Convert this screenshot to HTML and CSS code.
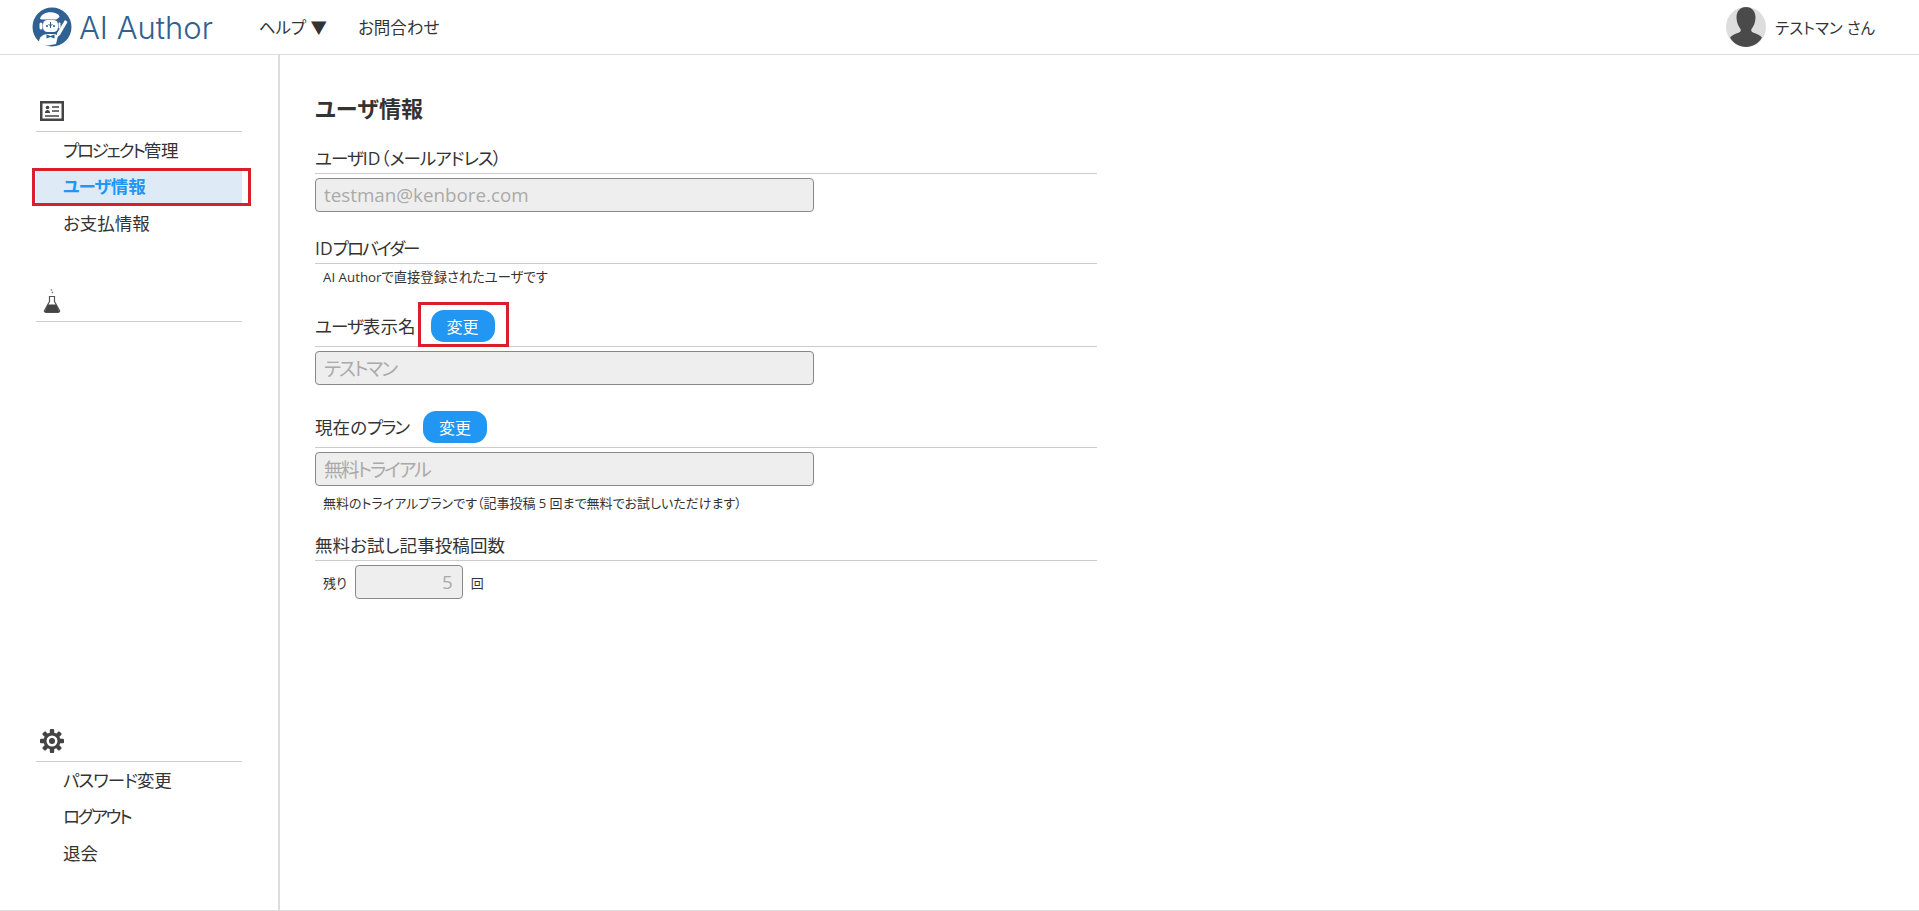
FILE: index.html
```html
<!DOCTYPE html>
<html lang="ja">
<head>
    <meta charset="UTF-8">
    <title>ユーザ情報 - AI Author</title>
    <link rel="stylesheet" href="styles.css">
</head>
<body>
    <header class="topbar">
        <a class="logo">
            <svg class="logoMark" viewBox="0 0 40 40">
                <circle cx="20" cy="20" r="19.5" fill="#2f6192"/>
                <path d="M8 12c1-5 7-7.500 13-6.500 4 .6 6.500 2.500 6.500 4.500l-3 2.500H10z" fill="#fff"/>
                <rect x="11" y="13" width="15" height="12" rx="4.500" fill="#fff"/>
                <rect x="7.500" y="15.500" width="3" height="7" rx="1.500" fill="#fff"/>
                <rect x="26.500" y="15.500" width="2" height="6" rx="1" fill="#fff"/>
                <circle cx="15" cy="19" r="1.100" fill="#2f6192"/>
                <circle cx="22" cy="19" r="1.100" fill="#2f6192"/>
                <path d="M18.500 15v6M16.500 17l2 2 2-2" stroke="#2f6192" stroke-width="1" fill="none"/>
                <path d="M7 35c0-5 4-8 9-8h6c2 0 3 1 4 2l-2 8-8 1.500c-4 0-7-1.500-9-3.500z" fill="#fff"/>
                <path d="M14.500 27.500l4 1.500 4-1.500v4l-4-1.500-4 1.500z" fill="#2f6192"/>
                <path d="M33 13l2.500 2-7.500 13-3.500 2.500.6-4.500z" fill="#fff"/>
            </svg>
            <span class="logoText">AI Author</span>
        </a>
        <nav class="topNav">
            <a>ヘルプ ▼</a>
            <a>お問合わせ</a>
        </nav>
        <div class="userBox">
            <svg class="avatar" viewBox="0 0 40 40">
                <circle cx="20" cy="20" r="20" fill="#ddd"/>
                <path d="M20 0c6 0 9.500 4.500 9.500 10.500 0 5-2 9-4 11.500-.8 1.500 0 3 2 3.800 3 1.200 6 2 8.500 4.700C32.500 36.500 26.500 40 20 40S7.500 36.500 4 30.500c2.500-2.700 5.500-3.500 8.500-4.700 2-.8 2.800-2.300 2-3.800-2-2.500-4-6.500-4-11.500C10.500 4.500 14 0 20 0z" fill="#4a4a4a"/>
            </svg>
            <span>テストマン さん</span>
        </div>
    </header>
    <div class="wrap">
        <aside class="side">
            <section class="sideGroup">
                <div class="sideHead">
                    <svg class="cardIcon" viewBox="0 0 24 20">
                        <rect x="1.250" y="1.250" width="21.500" height="17.500" fill="#fff" stroke="#444" stroke-width="2.500"/>
                        <circle cx="7.500" cy="6.500" r="1.800" fill="#444"/>
                        <path d="M5 12c0-2 1-3 2.500-3s2.500 1 2.500 3z" fill="#444"/>
                        <path d="M12 6h7M12 10h7M5 15h14" stroke="#444" stroke-width="1.500"/>
                    </svg>
                </div>
                <ul class="sideList">
                    <li><span class="kana">プロジェクト</span>管理</li>
                    <li class="active marked"><span class="kana soft">ユーザ</span>情報</li>
                    <li>お支払情報</li>
                </ul>
            </section>
            <section class="sideGroup labGroup">
                <div class="sideHead">
                    <svg class="flaskIcon" viewBox="0 0 18 24">
                        <circle cx="8.500" cy="1" r=".8" fill="#666"/>
                        <circle cx="9.500" cy="3.500" r=".8" fill="#666"/>
                        <path d="M6.500 7.500h5v5l5 9c.4 1-.2 1.800-1.200 1.800H2.700c-1 0-1.600-.8-1.200-1.800l5-9z" fill="#fff" stroke="#555" stroke-width="1.200"/>
                        <path d="M4.700 15.500h8.600l2.700 6.500c.2.800-.2 1.200-.8 1.200H2.800c-.6 0-1-.4-.8-1.200z" fill="#444"/>
                    </svg>
                </div>
            </section>
            <section class="sideGroup setGroup">
                <div class="sideHead">
                    <svg class="gearIcon" viewBox="0 0 24 24">
                        <g fill="#444">
                            <rect x="9.800" y="0" width="4.400" height="24" rx="1"/>
                            <rect x="9.800" y="0" width="4.400" height="24" rx="1" transform="rotate(45 12 12)"/>
                            <rect x="9.800" y="0" width="4.400" height="24" rx="1" transform="rotate(90 12 12)"/>
                            <rect x="9.800" y="0" width="4.400" height="24" rx="1" transform="rotate(135 12 12)"/>
                        </g>
                        <circle cx="12" cy="12" r="8.500" fill="#444"/>
                        <circle cx="12" cy="12" r="5.500" fill="#fff"/>
                        <circle cx="12" cy="12" r="3" fill="#444"/>
                    </svg>
                </div>
                <ul class="sideList">
                    <li><span class="kana soft">パスワード</span>変更</li>
                    <li><span class="kana">ログアウト</span></li>
                    <li>退会</li>
                </ul>
            </section>
        </aside>
        <main class="content">
            <h1 class="title">ユーザ情報</h1>
            <div class="field first">
                <div class="fieldHead"><span class="tightLabel">ユーザ</span>ID（<span class="tightLabel">メールアドレス</span>）</div>
                <input class="textBox" type="text" value="testman@kenbore.com" disabled>
            </div>
            <div class="field">
                <div class="fieldHead">ID<span class="tighterLabel">プロバイダー</span></div>
                <p class="note noteTop">AI Authorで直接登録されたユーザです</p>
            </div>
            <div class="field">
                <div class="fieldHead withBtn">
                    <span><span class="tightLabel">ユーザ</span>表示名</span>
                    <button class="btn nameBtn marked">変更</button>
                </div>
                <input class="textBox kanaBox" type="text" value="テストマン" disabled>
            </div>
            <div class="field planField">
                <div class="fieldHead withBtn">
                    <span>現在の<span class="tighterLabel">プラン</span></span>
                    <button class="btn planBtn">変更</button>
                </div>
                <input class="textBox kanaBox" type="text" value="無料トライアル" disabled>
                <p class="note">無料のトライアルプランです（記事投稿 5 回まで無料でお試しいただけます）</p>
            </div>
            <div class="field trialField">
                <div class="fieldHead">無料お試し記事投稿回数</div>
                <div class="countRow">
                    <span>残り</span>
                    <input class="textBox countBox" type="text" value="5" disabled>
                    <span>回</span>
                </div>
            </div>
        </main>
    </div>
</body>
</html>
```

FILE: styles.css
```css
*{padding:0;margin:0;box-sizing:border-box}
html,body{height:100%;overflow:hidden}
body{font-family:"Open Sans","Noto Sans CJK JP",sans-serif;font-feature-settings:"palt";color:#333;background:#fff;display:flex;flex-direction:column}
ul>li{list-style:none}

.topbar{height:55px;border-bottom:1px solid #ddd;display:flex;align-items:center;padding-left:32px;flex:none}
.logo{display:flex;align-items:center}
.logoMark{width:40px;height:40px}
.logoText{margin-left:7px;font-family:"Inter",sans-serif;font-weight:300;font-size:31px;color:#2f6192}
.topNav{display:flex;gap:31px;margin-left:46px;font-size:16.5px}
.userBox{margin-left:auto;margin-right:44px;display:flex;align-items:center;gap:9px;font-size:15.5px}
.avatar{width:40px;height:40px}

.wrap{flex:1;display:flex;border-bottom:1px solid #ddd;min-height:0}
.side{width:280px;flex:none;border-right:2px solid #ddd;padding:40px 36px 40.5px;display:flex;flex-direction:column}
.sideHead{height:37px;border-bottom:1px solid #ccc;padding-left:4px;display:flex;align-items:flex-start}
.cardIcon{width:24px;height:20px;margin-top:6px}
.flaskIcon{width:18px;height:24px;margin-left:3px;margin-top:4px}
.gearIcon{width:24px;height:24px;margin-top:4px}
.labGroup{margin-top:45px}
.setGroup{margin-top:auto}
.sideList{padding-top:2.5px;display:flex;flex-direction:column;gap:4.5px}
.sideList li{height:32px;line-height:30px;padding-left:27px;font-size:17.5px;position:relative}
.sideList .active{background:#deebf7;color:#2196f3;font-weight:700}
.kana{letter-spacing:-2.2px}
.kana.soft{letter-spacing:-1px}
.marked{position:relative}
.marked::after{content:"";position:absolute;border:3px solid #d8202c}
.sideList .marked::after{top:-3px;bottom:-3px;left:-4px;right:-9px}

.content{flex:1;padding:38px 0 0 35px}
.title{font-size:22px;line-height:30px;font-weight:700}
.field{width:782px;margin-top:23px}
.first{margin-top:22px}
.planField{margin-top:26px}
.trialField{margin-top:19px}
.fieldHead{height:29px;line-height:26px;border-bottom:1px solid #ccc;font-size:17.5px;letter-spacing:.1px}
.tightLabel{letter-spacing:-1px}
.tighterLabel{letter-spacing:-2px}
.withBtn{height:37px;display:flex;align-items:flex-start;line-height:32px}
.btn{height:32px;width:64px;border:none;border-radius:13px;background:#2196f3;color:#fff;font-family:inherit;font-feature-settings:inherit;font-size:16px;position:relative}
.nameBtn{margin-left:15px}
.planBtn{margin-left:15px}
.btn.marked::after{top:-8px;bottom:-5px;left:-13px;right:-14px}
.textBox{display:block;width:499px;height:34px;margin-top:4px;padding:0 8px;border:1px solid #888;border-radius:4px;background:#eee;color:#aaa;font-family:inherit;font-feature-settings:inherit;font-size:18.8px;opacity:1}
.kanaBox{letter-spacing:-2px}
.note{margin-top:7px;padding-left:8px;font-size:13px;line-height:20px}
.noteTop{margin-top:3px;font-size:13.3px}
.countRow{display:flex;align-items:center;padding-left:8px;font-size:13px;margin-top:4px}
.countBox{width:108px;margin:0 8px;text-align:right;padding-right:9px}
```
